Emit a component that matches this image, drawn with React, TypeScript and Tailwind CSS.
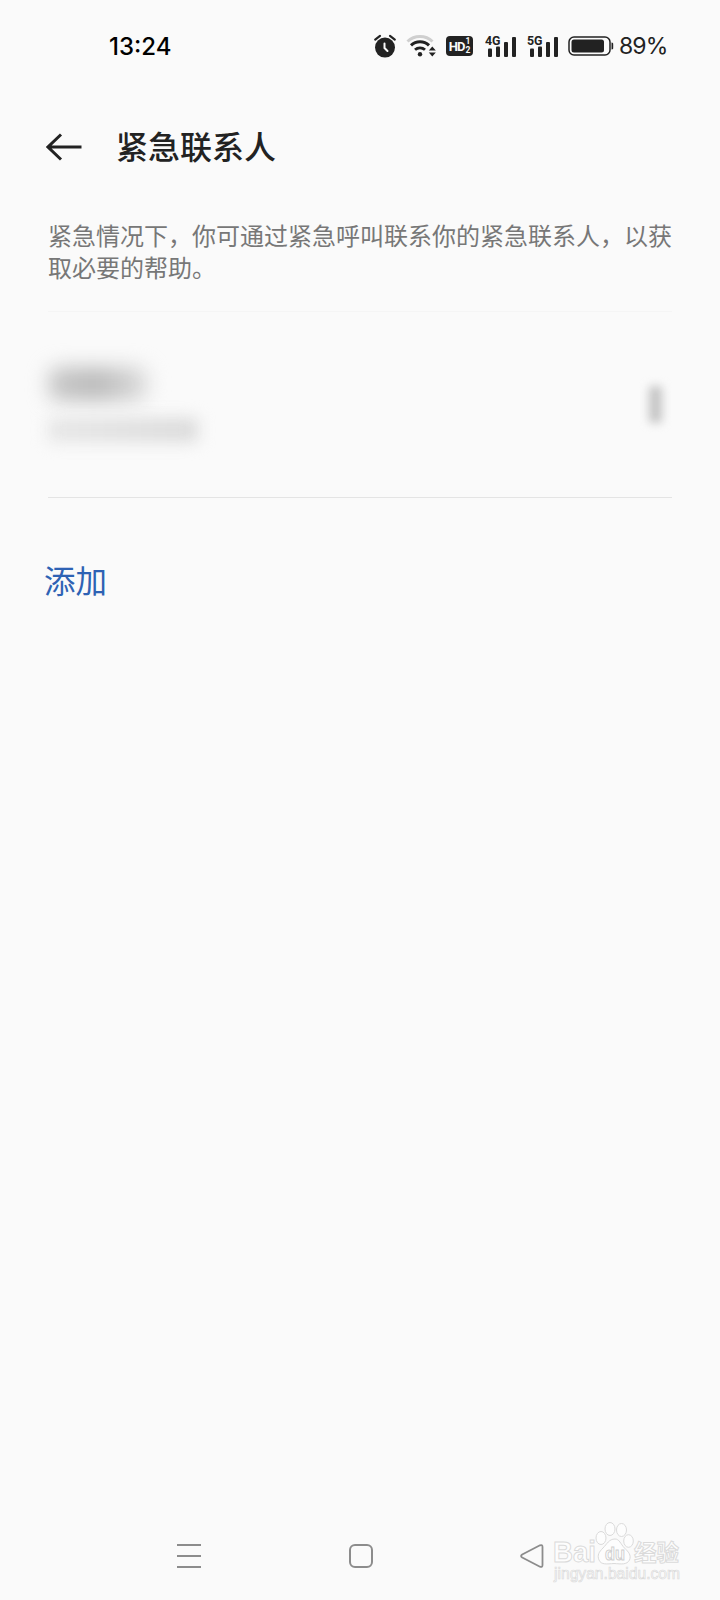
/**
 * EmergencyContacts - phone settings screen
 *
 * Lists the emergency contacts (redacted) with an add action,
 * framed by the system status and navigation bars.
 */

const description =
  "紧急情况下，你可通过紧急呼叫联系你的紧急联系人，以获取必要的帮助。";

function AlarmIcon() {
  return (
    <svg width="24" height="26" viewBox="0 0 24 26" fill="none" stroke="#222" strokeLinecap="round">
      <circle cx="12" cy="14.6" r="10" fill="#222" stroke="none" />
      <path d="M2.2 6.6 7 2.9M17 2.9l4.8 3.7" strokeWidth="2.2" />
      <path d="M11.500 10.500v4.500l3 3" stroke="#fafafa" strokeWidth="2" />
    </svg>
  );
}

function WifiIcon() {
  return (
    <svg width="32" height="26" viewBox="0 0 32 26" fill="none">
      <path d="M1.5 8.5a18 18 0 0 1 25 0" stroke="#cfcfcf" strokeWidth="3" />
      <path d="M5 12.3a13 13 0 0 1 18 0" stroke="#222" strokeWidth="3" />
      <path d="M9 16.8a7.4 7.4 0 0 1 10 0" stroke="#222" strokeWidth="2.8" />
      <circle cx="14" cy="21.3" r="2.2" fill="#222" />
      <path d="M22.8 17.6 26.3 13.6l3.5 4zM22.8 19.6h7l-3.5 4z" fill="#222" />
    </svg>
  );
}

function HdIcon() {
  return (
    <div className="flex h-5 w-[27px] items-center justify-center gap-px rounded-[4px] bg-[#222] font-['Roboto',sans-serif] font-bold text-[#fafafa]">
      <span className="text-[13px] leading-none tracking-[-1px]">HD</span>
      <span className="flex flex-col text-[8.5px] leading-[9px]">
        <span>1</span>
        <span>2</span>
      </span>
    </div>
  );
}

function SignalIcon({ label }: { label: string }) {
  return (
    <svg width="32" height="36" viewBox="0 -6 32 36" fill="#222" className="font-['Roboto',sans-serif] font-bold">
      <text x="0" y="11" fontSize="13.5" textLength="15.5" lengthAdjust="spacingAndGlyphs">
        {label}
      </text>
      <rect x="3" y="14.5" width="4" height="8.5" rx="1" />
      <rect x="11" y="12.5" width="4" height="10.5" rx="1" />
      <rect x="19" y="8" width="4" height="15" rx="1" />
      <rect x="27" y="3" width="4" height="20" rx="1" />
    </svg>
  );
}

function BatteryIcon() {
  return (
    <svg width="46" height="20" viewBox="0 0 46 20" fill="none">
      <rect x="1" y="1" width="41" height="18" rx="5" stroke="#222" strokeWidth="1.5" />
      <rect x="3.5" y="3.5" width="32.5" height="13" rx="2.5" fill="#222" />
      <path d="M43.5 6.5c1.700 0 1.700 1 1.700 2v3c0 1 0 2-1.700 2z" fill="#222" />
    </svg>
  );
}

function StatusBar() {
  return (
    <div className="flex h-[92px] items-center pl-[109px] font-['Inter',sans-serif]">
      <span className="w-[264px] pt-0.5 text-[24px] font-medium text-black">13:24</span>
      <AlarmIcon />
      <div className="ml-[9px]">
        <WifiIcon />
      </div>
      <div className="ml-2">
        <HdIcon />
      </div>
      <div className="ml-3">
        <SignalIcon label="4G" />
      </div>
      <div className="ml-2.5">
        <SignalIcon label="5G" />
      </div>
      <div className="ml-[9px]">
        <BatteryIcon />
      </div>
      <span className="ml-[5px] pt-px text-[23px] tracking-[-0.9px] text-[#222]">89%</span>
    </div>
  );
}

function Header() {
  return (
    <header className="flex h-[110px] items-center pl-[46px]">
      <svg width="36" height="28" viewBox="0 0 36 28" fill="none" stroke="#222" strokeWidth="3">
        <path d="M1.5 14H35.5M15 1.5 2 14l13 12.5" />
      </svg>
      <h1 className="ml-[34px] pb-1 text-[32px] font-medium leading-none text-[#222]">紧急联系人</h1>
    </header>
  );
}

/** Contact row with its name, number and menu blurred out */
function RedactedContact() {
  return (
    <div className="flex h-[187px] items-center justify-between border-y border-t-[#f5f5f5] border-b-[#e4e4e4] pr-2.5">
      <div className="flex flex-col gap-[17px]">
        <div className="h-[34px] w-[100px] rounded-xl bg-linear-to-r from-[#c8c8c8] via-[#bababa] to-[#dedede] blur-[10px]" />
        <div className="h-6 w-[150px] rounded bg-linear-to-r from-[#e6e6e6] to-[#dadada] blur-[8px]" />
      </div>
      <div className="h-[37px] w-[13px] rounded bg-[#c4c4c4] blur-[5px]" />
    </div>
  );
}

function Watermark() {
  return (
    <svg
      className="absolute bottom-[14px] left-[550px] font-['Liberation_Sans','Noto_Sans_CJK_SC',sans-serif] font-bold"
      width="136"
      height="70"
      viewBox="0 0 136 70"
      fill="#fdfdfd"
      stroke="#dadada"
      strokeWidth="1"
    >
      <text x="3" y="46" fontSize="30" textLength="43" lengthAdjust="spacingAndGlyphs">Bai</text>
      <ellipse cx="51" cy="22" rx="5" ry="6.5" />
      <ellipse cx="60" cy="13" rx="5" ry="6.5" />
      <ellipse cx="71.5" cy="14" rx="5" ry="6.5" />
      <ellipse cx="78.5" cy="25" rx="4.8" ry="6.3" />
      <path d="M65 23c-6 0-8 5-12 9s-6 7-4 12c2 5 8 4 15 3.5 7 .5 13 1.5 15.5-3.5 2-5-1-8-5-12s-5-9-9.5-9z" />
      <text x="55" y="43.5" fontSize="19" textLength="20" lengthAdjust="spacingAndGlyphs" stroke="#cfcfcf">du</text>
      <text x="84" y="45" fontSize="23" textLength="45" lengthAdjust="spacingAndGlyphs">经验</text>
      <text x="4" y="63" fontSize="16" className="font-normal" strokeWidth=".7" textLength="126" lengthAdjust="spacingAndGlyphs">jingyan.baidu.com</text>
    </svg>
  );
}

function NavigationBar() {
  return (
    <nav className="flex h-[88px] items-center pl-[177px]">
      <svg width="24" height="26" viewBox="0 0 24 26" stroke="#8c8c8c" strokeWidth="2">
        <path d="M0 2h24M0 13h24M0 24h24" />
      </svg>
      <div className="ml-[148px] size-6 rounded-md border-2 border-[#8c8c8c]" />
      <svg className="ml-[147px]" width="24" height="26" viewBox="0 0 24 26" fill="none" stroke="#8c8c8c" strokeWidth="1.8" strokeLinejoin="round">
        <path d="M2.2 11.5 20 2.3q2.5-1 2.5 1.7v18q0 2.700-2.500 1.700L2.200 14.500q-2.200-1.500 0-3z" />
      </svg>
    </nav>
  );
}

export default function App() {
  return (
    <div className="relative flex h-[1600px] w-[720px] flex-col overflow-hidden bg-[#fafafa] font-['Noto_Sans_CJK_SC',sans-serif]">
      <StatusBar />
      <Header />
      <main className="flex-1 px-12">
        <p className="mt-[17px] h-[92px] text-[24px] leading-8 text-[#777]">{description}</p>
        <RedactedContact />
        <button className="-ml-1 mt-[65px] block text-[31.5px] leading-8 text-[#2e62b4]">添加</button>
      </main>
      <NavigationBar />
      <Watermark />
    </div>
  );
}
